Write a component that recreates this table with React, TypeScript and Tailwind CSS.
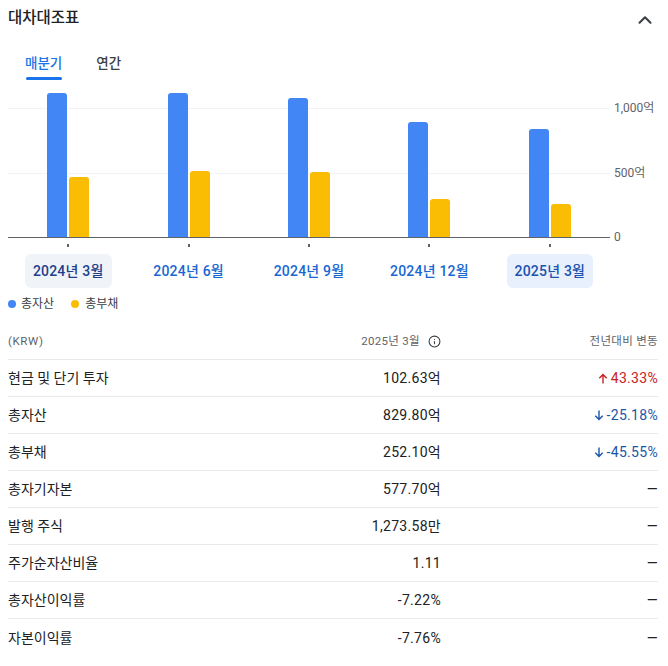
import React from "react";
import { ChevronUp, Info } from "lucide-react";

const FONT = { fontFamily: 'Roboto, "Noto Sans CJK KR", "Noto Sans", sans-serif' };

const groups = [
  { label: "2024년 3월", a: 144, l: 60, state: "hover" },
  { label: "2024년 6월", a: 144, l: 66, state: "" },
  { label: "2024년 9월", a: 139, l: 65, state: "" },
  { label: "2024년 12월", a: 115, l: 38, state: "" },
  { label: "2025년 3월", a: 108, l: 33, state: "sel" },
];

type Row = { name: string; value: string; change: string; dir: "up" | "down" | "none" };
const rows: Row[] = [
  { name: "현금 및 단기 투자", value: "102.63억", change: "43.33%", dir: "up" },
  { name: "총자산", value: "829.80억", change: "-25.18%", dir: "down" },
  { name: "총부채", value: "252.10억", change: "-45.55%", dir: "down" },
  { name: "총자기자본", value: "577.70억", change: "—", dir: "none" },
  { name: "발행 주식", value: "1,273.58만", change: "—", dir: "none" },
  { name: "주가순자산비율", value: "1.11", change: "—", dir: "none" },
  { name: "총자산이익률", value: "-7.22%", change: "—", dir: "none" },
  { name: "자본이익률", value: "-7.76%", change: "—", dir: "none" },
];

function Arrow({ up }: { up: boolean }) {
  return (
    <svg width="10" height="11" viewBox="0 0 10 11" className="mr-[3px]">
      {up ? (
        <path d="M5 10.5V1.5M1.3 5.2L5 1.5L8.7 5.2" fill="none" stroke="currentColor" strokeWidth="1.4" />
      ) : (
        <path d="M5 0.5V9.5M1.3 5.8L5 9.5L8.7 5.8" fill="none" stroke="currentColor" strokeWidth="1.4" />
      )}
    </svg>
  );
}

export default function App() {
  return (
    <div className="w-[668px] h-[666px] bg-white overflow-hidden text-[#202124]" style={FONT}>
      {/* Title */}
      <div className="h-9 flex items-center justify-between pl-2 pr-[12px]">
        <div className="text-[15.5px] font-medium pt-[1px]">대차대조표</div>
        <ChevronUp size={22} strokeWidth={2.3} className="text-[#3c4043] mt-1" />
      </div>

      {/* Tabs */}
      <div className="flex mt-[17px] pl-[25px] gap-[34px]">
        <div className="flex flex-col items-center">
          <div className="text-[13.5px] leading-5 font-medium text-[#1a73e8]">매분기</div>
          <div className="mt-[4px] h-[3px] w-[36px] rounded-full bg-[#1a73e8]" />
        </div>
        <div className="flex flex-col items-center">
          <div className="text-[13.5px] leading-5 font-medium text-[#3c4043]">연간</div>
        </div>
      </div>

      {/* Chart */}
      <div className="mt-[8px] flex pl-2">
        <div className="relative w-[602px] h-[150px] border-b border-[#5f6368]">
          <div className="absolute left-0 right-0 top-[20px] h-px bg-[#f1f3f4]" />
          <div className="absolute left-0 right-0 top-[85px] h-px bg-[#f1f3f4]" />
          <div className="relative flex h-full">
            {groups.map((g) => (
              <div key={g.label} className="flex-1 flex items-end justify-center gap-[2px]">
                <div className="w-[20px] bg-[#4285f4] rounded-t-[3px]" style={{ height: g.a }} />
                <div className="w-[20px] bg-[#fbbc04] rounded-t-[3px]" style={{ height: g.l }} />
              </div>
            ))}
          </div>
        </div>
        <div className="relative w-[50px] h-[150px] text-[12px] text-[#5f6368]">
          <div className="absolute left-[4px] top-[11px] leading-[18px]">1,000억</div>
          <div className="absolute left-[4px] top-[76px] leading-[18px]">500억</div>
          <div className="absolute left-[4px] top-[140px] leading-[18px]">0</div>
        </div>
      </div>

      {/* ticks */}
      <div className="flex pl-2 h-4">
        <div className="w-[602px] flex">
          {groups.map((g) => (
            <div key={g.label} className="flex-1 flex justify-center">
              <div className="mt-[6px] w-[2px] h-[3px] bg-[#5f6368]" />
            </div>
          ))}
        </div>
      </div>

      {/* labels */}
      <div className="flex pl-2">
        <div className="w-[602px] flex">
          {groups.map((g) => (
            <div key={g.label} className="flex-1 flex justify-center">
              <div
                className={
                  "h-[34px] px-[8px] flex items-center rounded-[6px] text-[14px] font-medium tracking-[0.2px] whitespace-nowrap " +
                  (g.state === "hover"
                    ? "bg-[#f0f4f9] text-[#1f3f8c]"
                    : g.state === "sel"
                    ? "bg-[#e8f0fe] text-[#1b53ad]"
                    : "text-[#1967d2]")
                }
              >
                {g.label}
              </div>
            </div>
          ))}
        </div>
      </div>

      {/* legend */}
      <div className="mt-[8px] flex items-center pl-2 text-[12px] leading-4 text-[#3c4043]">
        <span className="w-2 h-2 rounded-full bg-[#4285f4]" />
        <span className="ml-[5px]">총자산</span>
        <span className="ml-[17px] w-2 h-2 rounded-full bg-[#fbbc04]" />
        <span className="ml-[6px]">총부채</span>
      </div>

      {/* table */}
      <div className="mt-[12px] pl-2 pr-[10px]">
        <div className="h-9 flex items-center border-b border-[#e8eaed] text-[11.5px] text-[#5f6368]">
          <div className="flex-1 tracking-[0.6px]">(KRW)</div>
          <div className="w-[160px] flex items-center justify-end">
            <span className="tracking-[0.3px]">2025년 3월</span>
            <Info size={13} strokeWidth={2} className="ml-[8px] text-[#3c4043]" />
          </div>
          <div className="w-[217px] text-right tracking-[0.3px]">전년대비 변동</div>
        </div>
        {rows.map((r, i) => (
          <div
            key={r.name}
            className={
              "h-[37px] flex items-center text-[14px] pt-[1px] " +
              (i < rows.length - 1 ? "border-b border-[#e8eaed]" : "")
            }
          >
            <div className="flex-1">{r.name}</div>
            <div className="w-[160px] text-right tracking-[0.3px]">{r.value}</div>
            <div
              className={
                "w-[217px] flex items-center justify-end tracking-[0.3px] " +
                (r.dir === "up" ? "text-[#c5221f]" : r.dir === "down" ? "text-[#1a55a8]" : "text-[#202124]")
              }
            >
              {r.dir !== "none" && <Arrow up={r.dir === "up"} />}
              <span>{r.change}</span>
            </div>
          </div>
        ))}
      </div>
    </div>
  );
}
